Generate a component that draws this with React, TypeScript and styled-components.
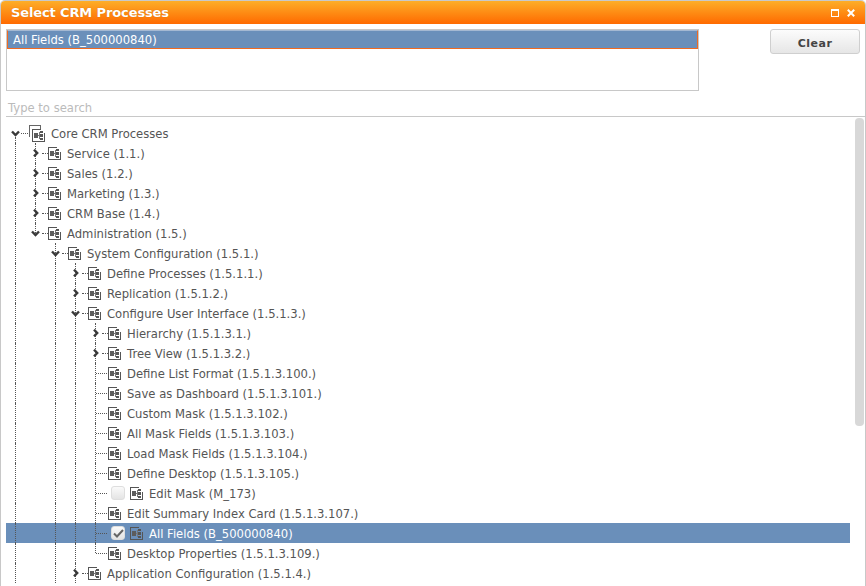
import React from "react";
import styled, { createGlobalStyle } from "styled-components";

const Global = createGlobalStyle`
  html, body { margin: 0; padding: 0; background: #fff; overflow: hidden; }
  * { box-sizing: border-box; }
`;

const Win = styled.div`
  width: 866px; height: 586px; display: flex; flex-direction: column; overflow: hidden;
  font-family: "DejaVu Sans", Verdana, sans-serif; font-size: 11.6px; color: #555;
  border-left: 1px solid #c8c8c8; border-right: 1px solid #c8c8c8;
  border-top: 1px solid #c9c9c9; border-radius: 5px 5px 0 0; background: #fff;
`;
const TitleBar = styled.div`
  height: 23px; flex: none; display: flex; align-items: center; justify-content: space-between;
  padding: 0 10px 1px 10px;
  background: linear-gradient(#fdae28, #ff6a00);
`;
const Title = styled.div`
  font-size: 13px; font-weight: bold; color: #fff; text-shadow: 0 0 1px #c86a00; letter-spacing: -0.12px;
`;
const WinButtons = styled.div` display: flex; align-items: center; gap: 8px; margin-top: 1px; `;
const Top = styled.div`
  flex: none; display: flex; justify-content: space-between; padding: 5px 5px 0 5px; height: 52px;
`;
const SelectedBox = styled.div`
  width: 693px; height: 62px; border: 1px solid #c8c8c8; background: #fff;
`;
const SelectedItem = styled.div`
  height: 19px; background: #6a8fba; border: 1px solid #ef6a22; border-top-color: #a4b8d2;
  color: #fff; padding-left: 5px; line-height: 19px;
`;
const ClearBtn = styled.button`
  width: 90px; height: 25px; border: 1px solid #cfcfcf; border-radius: 3px;
  background: linear-gradient(#fcfcfc, #e6e6e6); color: #444; font: bold 11px "DejaVu Sans", sans-serif;
  letter-spacing: 0.5px; padding: 3px 0 0 0;
`;
const Search = styled.div`
  flex: none; height: 41px; margin-left: 5px; padding: 0 0 0 2px; border-bottom: 1px solid #c8c8c8;
  display: flex; align-items: flex-end; color: #bbb; line-height: 15px;
`;
const TreeArea = styled.div`
  flex: 1; min-height: 0; display: flex; padding-top: 1px;
`;
const Tree = styled.div`
  flex: 1; min-width: 0; padding: 5px 0 0 5px; margin-right: 5px; overflow: hidden;
`;
const Track = styled.div` width: 9px; margin-right: 1px; flex: none; `;
const Thumb = styled.div`
  width: 9px; height: 308px; background: #d8d8d8; border-radius: 4px;
`;
const Row = styled.div<{ $sel?: boolean }>`
  height: 20px; display: flex; align-items: center;
  background: ${p => (p.$sel ? "#6a8fba" : "transparent")};
  color: ${p => (p.$sel ? "#fff" : "#555")};
`;
const Guide = styled.div<{ $on?: boolean }>`
  width: 20px; height: 20px; flex: none; position: relative;
  ${p => p.$on ? `&::before { content: ""; position: absolute; left: 9px; top: 0; bottom: 0; border-left: 1px dotted #555; }` : ""}
`;
const Joint = styled.div<{ $line: "tee" | "last" | "root" }>`
  width: 20px; height: 20px; flex: none; position: relative;
  &::before {
    content: ""; position: absolute; left: 9px; border-left: 1px dotted #555;
    top: ${p => (p.$line === "root" ? "14px" : "0")};
    bottom: ${p => (p.$line === "last" ? "10px" : "0")};
  }
`;
const Connector = styled.div<{ $from: number; $w: number }>`
  position: absolute; left: ${p => p.$from}px; top: 10px; width: ${p => p.$w}px; border-top: 1px dotted #555;
`;
const ToggleIcon = styled.svg`
  position: absolute;
`;
const Check = styled.div`
  width: 14px; height: 14px; margin-left: 5px; margin-right: 5px; flex: none; border-radius: 3px;
  border: 1px solid #dedede; background: linear-gradient(#fafafa, #e4e4e4);
  display: flex; align-items: center; justify-content: center;
`;
const Label = styled.span<{ $gap: number }>`
  margin-left: ${p => p.$gap}px; white-space: nowrap; line-height: 20px; padding-top: 2px;
`;
const IconBox = styled.svg<{ $ml: number }>`
  flex: none; margin-left: ${p => p.$ml}px; display: block;
`;

const Proc = ({ ml = 2 }: { ml?: number }) => (
  <IconBox $ml={ml} width="13" height="13" viewBox="0 0 13 13" shapeRendering="crispEdges">
    <path d="M9 .5H.5V12.5H12.5V5" fill="none" stroke="#555" />
    <rect x="2" y="4" width="4" height="5" fill="#5c5c5c" />
    <path d="M6 6.5h2M7.5 3v7" stroke="#777" fill="none" />
    <rect x="8" y="2" width="3" height="2" fill="#555" />
    <rect x="8" y="5" width="3" height="3" fill="#555" />
    <rect x="8" y="9" width="3" height="2" fill="#555" />
  </IconBox>
);
const RootProc = () => (
  <IconBox $ml={3} width="16" height="17" viewBox="0 0 16 17" shapeRendering="crispEdges">
    <path d="M.5 12V.5H11.5V4" fill="none" stroke="#666" />
    <path d="M11.5 4.5H3.5V16.5H15.5V8" fill="#fff" stroke="#555" />
    <rect x="5" y="8" width="4" height="5" fill="#5c5c5c" />
    <path d="M9 10.5h2M10.5 7v7" stroke="#777" fill="none" />
    <rect x="11" y="6" width="3" height="2" fill="#555" />
    <rect x="11" y="9" width="3" height="3" fill="#555" />
    <rect x="11" y="13" width="3" height="2" fill="#555" />
  </IconBox>
);
const Chevron = ({ open }: { open: boolean }) => (
  <ToggleIcon width="9" height="8" viewBox="0 0 9 8" style={open ? { left: 5, top: 7 } : { left: 7, top: 6 }}>
    <path
      d={open ? "M1 1.5 L4.5 5 L8 1.5" : "M1 .7 L4.2 4 L1 7.3"}
      fill="none" stroke="#3a3a3a" strokeWidth="2.4"
    />
  </ToggleIcon>
);

type N = {
  d: number; t: string; tog?: "open" | "closed"; line?: "tee" | "last" | "root";
  check?: "on" | "off"; sel?: boolean;
};
const rows: N[] = [
  { d: 0, t: "Core CRM Processes", tog: "open", line: "root" },
  { d: 1, t: "Service (1.1.)", tog: "closed" },
  { d: 1, t: "Sales (1.2.)", tog: "closed" },
  { d: 1, t: "Marketing (1.3.)", tog: "closed" },
  { d: 1, t: "CRM Base (1.4.)", tog: "closed" },
  { d: 1, t: "Administration (1.5.)", tog: "open", line: "last" },
  { d: 2, t: "System Configuration (1.5.1.)", tog: "open" },
  { d: 3, t: "Define Processes (1.5.1.1.)", tog: "closed" },
  { d: 3, t: "Replication (1.5.1.2.)", tog: "closed" },
  { d: 3, t: "Configure User Interface (1.5.1.3.)", tog: "open" },
  { d: 4, t: "Hierarchy (1.5.1.3.1.)", tog: "closed" },
  { d: 4, t: "Tree View (1.5.1.3.2.)", tog: "closed" },
  { d: 4, t: "Define List Format (1.5.1.3.100.)" },
  { d: 4, t: "Save as Dashboard (1.5.1.3.101.)" },
  { d: 4, t: "Custom Mask (1.5.1.3.102.)" },
  { d: 4, t: "All Mask Fields (1.5.1.3.103.)" },
  { d: 4, t: "Load Mask Fields (1.5.1.3.104.)" },
  { d: 4, t: "Define Desktop (1.5.1.3.105.)" },
  { d: 4, t: "Edit Mask (M_173)", check: "off" },
  { d: 4, t: "Edit Summary Index Card (1.5.1.3.107.)" },
  { d: 4, t: "All Fields (B_500000840)", check: "on", sel: true },
  { d: 4, t: "Desktop Properties (1.5.1.3.109.)", line: "last" },
  { d: 3, t: "Application Configuration (1.5.1.4.)", tog: "closed" },
];

const ancestorLine = [true, false, true, true];

const TreeRow = ({ n }: { n: N }) => (
  <Row $sel={n.sel}>
    {Array.from({ length: n.d }, (_, i) => (
      <Guide key={i} $on={ancestorLine[i]} />
    ))}
    <Joint $line={n.line ?? "tee"}>
      {n.tog ? <Connector $from={n.d === 0 ? 15 : 16} $w={n.d === 0 ? 7 : 6} /> : <Connector $from={10} $w={11} />}
      {n.tog && <Chevron open={n.tog === "open"} />}
    </Joint>
    {n.check ? (
      <>
        <Check>
          {n.check === "on" && (
            <svg width="11" height="9" viewBox="0 0 11 9">
              <path d="M1 4.5 L4 7.5 L10 1" fill="none" stroke="#666" strokeWidth="2" />
            </svg>
          )}
        </Check>
        <Proc ml={0} />
      </>
    ) : n.d === 0 ? (
      <RootProc />
    ) : (
      <Proc />
    )}
    <Label $gap={6}>{n.t}</Label>
  </Row>
);

export default function App() {
  return (
    <Win>
      <Global />
      <TitleBar>
        <Title>Select CRM Processes</Title>
        <WinButtons>
          <svg width="8" height="8" viewBox="0 0 8 8" shapeRendering="crispEdges">
            <path d="M.5 1.5H7.5V7.5H.5Z" fill="none" stroke="#fff" />
            <path d="M0 1h8" stroke="#fff" strokeWidth="2" />
          </svg>
          <svg width="8" height="8" viewBox="0 0 8 8">
            <path d="M.8 .8L7.2 7.2M7.2 .8L.8 7.2" stroke="#fff" strokeWidth="2" fill="none" />
          </svg>
        </WinButtons>
      </TitleBar>
      <Top>
        <SelectedBox>
          <SelectedItem>All Fields (B_500000840)</SelectedItem>
        </SelectedBox>
        <ClearBtn>Clear</ClearBtn>
      </Top>
      <Search>Type to search</Search>
      <TreeArea>
        <Tree>
          {rows.map((n, i) => (
            <TreeRow key={i} n={n} />
          ))}
        </Tree>
        <Track>
          <Thumb />
        </Track>
      </TreeArea>
    </Win>
  );
}
